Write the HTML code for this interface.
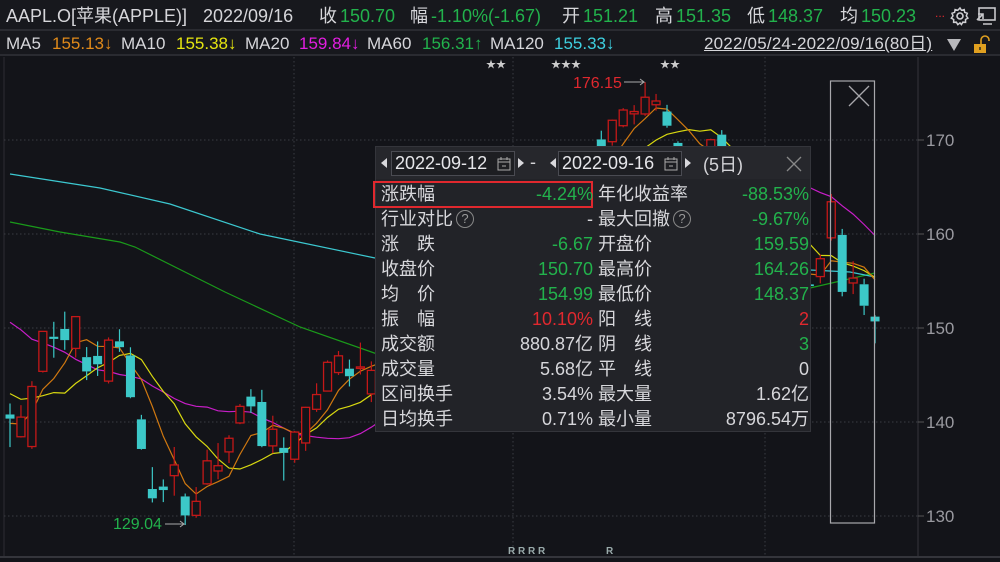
<!DOCTYPE html>
<html><head><meta charset="utf-8">
<style>
*{margin:0;padding:0;box-sizing:border-box}
body{width:1000px;height:562px;background:#131419;overflow:hidden;position:relative;font-family:"Liberation Sans","Noto Sans CJK SC",sans-serif;color:#d4d4d8}
.row{position:absolute;left:0;width:1000px;white-space:nowrap}
#r1{top:0;height:31px;background:#17181d;font-size:18px;line-height:33px;border-bottom:2px solid #2a2b31}
#r2{top:31px;height:25px;background:#17181d;font-size:17px;line-height:25px;border-bottom:2px solid #2a2b31}
.g{color:#22b24c}.w{color:#d6d6da}.o{color:#e08a1a}.y{color:#e5e510}.m{color:#e21ee0}.c{color:#3ed0e0}.r{color:#e0282e}
#panel{position:absolute;left:375px;top:146px;width:436px;height:286px;background:#222328;border:1px solid #34353b;font-size:18px}
#panel .hd{height:32px;background:#26272c;position:relative}
.dt{position:absolute;top:4px;height:25px;border:1px solid #4a4b52;background:#1d1e22;font-size:18px;line-height:23px;padding-left:3px;color:#e6e6ea;width:124px;white-space:nowrap}
.tri{position:absolute;top:11px;width:0;height:0;border-top:5px solid transparent;border-bottom:5px solid transparent}
.tl{border-right:6px solid #d8d8dc}.tr{border-left:6px solid #d8d8dc}
.rw{position:absolute;height:25px;line-height:25px;font-size:18px;white-space:nowrap}
.lab{position:absolute;color:#d8d8dc}
.val{position:absolute;text-align:right}
</style></head><body>
<div id="r1" class="row">
<span style="position:absolute;left:6px" class="w">AAPL.O[苹果(APPLE)]</span>
<span style="position:absolute;left:203px" class="w">2022/09/16</span>
<span style="position:absolute;left:319px" class="w">收</span><span style="position:absolute;left:340px" class="g">150.70</span>
<span style="position:absolute;left:410px" class="w">幅</span><span style="position:absolute;left:431px" class="g">-1.10%(-1.67)</span>
<span style="position:absolute;left:562px" class="w">开</span><span style="position:absolute;left:583px" class="g">151.21</span>
<span style="position:absolute;left:655px" class="w">高</span><span style="position:absolute;left:676px" class="g">151.35</span>
<span style="position:absolute;left:747px" class="w">低</span><span style="position:absolute;left:768px" class="g">148.37</span>
<span style="position:absolute;left:840px" class="w">均</span><span style="position:absolute;left:861px" class="g">150.23</span>
<span style="position:absolute;left:935px;top:-3px;font-size:12px" class="r">...</span>
<svg style="position:absolute;left:950px;top:6px" width="20" height="20" viewBox="0 0 20 20"><circle cx="10" cy="10" r="3" fill="none" stroke="#d0d0d4" stroke-width="1.6"/><path d="M10 2l1.5 2.3 2.7-.7.5 2.7 2.6 1-1 2.6 1.6 2.2-2.4 1.4.1 2.8-2.8-.1-1.4 2.4L10 16.9 7.8 18.6 6.4 16.2l-2.8.1.1-2.8-2.4-1.4L3 9.9 2 7.3l2.6-1 .5-2.7 2.7.7z" fill="none" stroke="#d0d0d4" stroke-width="1.5"/></svg>
<svg style="position:absolute;left:975px;top:6px" width="22" height="20" viewBox="0 0 22 20"><rect x="4" y="2" width="16" height="12" fill="none" stroke="#c8c8cc" stroke-width="1.6"/><path d="M8 18h9M2 14l6-6M3 8h5v5" stroke="#c8c8cc" stroke-width="1.6" fill="none"/></svg>
</div>
<div id="r2" class="row">
<span style="position:absolute;left:6px" class="w">MA5</span><span style="position:absolute;left:52px" class="o">155.13↓</span>
<span style="position:absolute;left:121px" class="w">MA10</span><span style="position:absolute;left:176px" class="y">155.38↓</span>
<span style="position:absolute;left:245px" class="w">MA20</span><span style="position:absolute;left:299px" class="m">159.84↓</span>
<span style="position:absolute;left:367px" class="w">MA60</span><span style="position:absolute;left:422px" class="g">156.31↑</span>
<span style="position:absolute;left:490px" class="w">MA120</span><span style="position:absolute;left:554px" class="c">155.33↓</span>
<span style="position:absolute;left:704px;text-decoration:underline;letter-spacing:0.2px" class="w">2022/05/24-2022/09/16(80日)</span>
<span style="position:absolute;left:947px;top:8px;width:0;height:0;border-left:7px solid transparent;border-right:7px solid transparent;border-top:12px solid #b8b8bc"></span>
<svg style="position:absolute;left:972px;top:3px" width="20" height="20" viewBox="0 0 20 20"><path d="M9 10V6a4 4 0 0 1 8 0v1" fill="none" stroke="#e0a020" stroke-width="1.6"/><rect x="2" y="10" width="12" height="9" fill="#e0a020"/><rect x="7.3" y="13" width="1.4" height="3" fill="#222"/></svg>
</div>
<svg id="ch" style="position:absolute;left:0;top:57px" width="1000" height="505"></svg>
<div id="panel">
 <div class="hd">
  <div class="tri tl" style="left:5px"></div>
  <div class="dt" style="left:15px">2022-09-12<svg style="position:absolute;right:3px;top:5px" width="14" height="14"><rect x="1" y="2" width="12" height="11" fill="none" stroke="#aaa"/><path d="M1 5h12M4 0v3M10 0v3M5 9h4" stroke="#aaa"/></svg></div>
  <div class="tri tr" style="left:142px"></div>
  <span style="position:absolute;left:154px;top:5px">-</span>
  <div class="tri tl" style="left:174px"></div>
  <div class="dt" style="left:182px">2022-09-16<svg style="position:absolute;right:3px;top:5px" width="14" height="14"><rect x="1" y="2" width="12" height="11" fill="none" stroke="#aaa"/><path d="M1 5h12M4 0v3M10 0v3M5 9h4" stroke="#aaa"/></svg></div>
  <div class="tri tr" style="left:309px"></div>
  <span style="position:absolute;left:327px;top:4px">(5日)</span>
  <svg style="position:absolute;left:410px;top:9px" width="16" height="16"><path d="M1 1l14 14M15 1L1 15" stroke="#888" stroke-width="1.3"/></svg>
 </div>
 <div style="position:absolute;left:-3px;top:34px;width:220px;height:27px;border:2px solid #e0282e"></div>
 <div id="rows"></div>
</div>
<script>
const Q='<span style="display:inline-block;width:18px;height:18px;border:1.5px solid #888;border-radius:50%;font-size:13px;line-height:15px;text-align:center;color:#999;vertical-align:2px;margin-left:3px">?</span>';
const rowsData=[["涨跌幅","-4.24%","g","年化收益率","-88.53%","g"],["行业对比ⓘ","-","w","最大回撤ⓘ","-9.67%","g"],["涨　跌","-6.67","g","开盘价","159.59","g"],["收盘价","150.70","g","最高价","164.26","g"],["均　价","154.99","g","最低价","148.37","g"],["振　幅","10.10%","r","阳　线","2","r"],["成交额","880.87亿","w","阴　线","3","g"],["成交量","5.68亿","w","平　线","0","w"],["区间换手","3.54%","w","最大量","1.62亿","w"],["日均换手","0.71%","w","最小量","8796.54万","w"]];
let h="";rowsData.forEach((r,i)=>{let t=35+i*25;
h+=`<div class="rw" style="top:${t}px;left:0;width:436px"><span class="lab" style="left:5px">${r[0].replace('ⓘ',Q)}</span><span class="val ${r[2]}" style="right:219px">${r[1]}</span><span class="lab" style="left:222px">${r[3].replace('ⓘ',Q)}</span><span class="val ${r[5]}" style="right:3px">${r[4]}</span></div>`});
document.getElementById('rows').innerHTML=h;
const pre=[156.8,156.57,163.64,157.65,157.96,159.48,166.02,156.77,157.28,152.06,154.51,146.5,142.56,147.11,145.54,149.24,140.82,137.35,137.59,143.11];
const D=`140.8 141.97 137.33 140.36,138.43 141.79 138.34 140.52,137.39 144.34 137.14 143.78,145.39 149.68 145.26 149.64,149.07 150.66 146.84 148.84,149.9 151.74 147.68 148.71,147.83 151.27 146.86 151.21,146.9 147.97 144.46 145.38,147.03 148.57 144.9 146.14,144.35 149 144.1 148.71,148.58 149.87 147.46 147.96,147.08 147.95 142.53 142.64,140.28 140.76 137.06 137.13,132.87 135.2 131.44 131.88,133.13 133.89 131.48 132.76,134.29 137.34 132.16 135.43,132.08 132.39 129.04 130.06,130.07 133.08 129.81 131.56,133.42 137.06 133.32 135.87,134.79 137.76 133.91 135.35,136.82 138.59 135.63 138.27,139.9 141.91 139.77 141.66,142.7 143.49 140.97 141.66,142.13 143.42 137.32 137.44,137.46 140.67 136.67 139.23,137.25 138.37 133.77 136.72,136.04 139.04 135.66 138.93,137.77 141.61 136.93 141.56,141.35 144.12 141.08 142.92,143.29 146.55 143.28 146.35,145.26 147.55 145 147.04,145.67 146.64 143.78 144.87,145.76 148.45 145.05 145.86,142.99 146.45 142.12 145.49,144.08 148.95 143.25 148.47,149.78 150.86 148.2 150.17,150.74 151.57 146.7 147.07,147.92 151.23 146.91 151,151.12 153.72 150.37 153.04,154.5 155.57 151.94 155.35,155.39 156.28 153.41 154.09,154.01 155.04 152.28 152.95,152.26 153.09 150.8 151.6,152.58 157.33 152.16 156.79,156.98 157.64 154.41 157.35,161.24 163.63 159.5 162.51,161.01 163.59 160.89 161.51,160.1 162.41 159.63 160.01,160.84 166.59 160.75 166.13,166.01 167.19 164.43 165.81,163.21 165.85 163 165.35,166.37 167.81 164.2 164.87,164.02 165.82 163.25 164.92,167.68 169.34 166.9 169.24,170.06 170.99 168.19 168.49,169.82 172.17 169.4 172.1,171.52 173.39 171.35 173.19,172.78 173.71 171.66 173.03,172.77 176.15 172.57 174.55,173.75 174.9 173.12 174.15,173.03 173.74 171.31 171.52,169.69 169.86 167.14 167.57,167.08 168.71 166.65 167.23,167.32 168.11 166.25 167.53,168.78 170.14 168.35 170.03,170.57 171.05 163.56 163.62,161.15 162.9 159.82 161.38,162.13 162.56 157.72 158.91,160.31 160.58 157.14 157.22,156.64 158.42 154.67 157.96,159.75 160.36 154.97 155.81,156.47 157.09 153.69 154.53,154.82 156.67 153.61 155.96,154.64 156.36 152.68 154.46,155.47 157.82 154.75 157.37,159.59 164.26 159.3 163.43,159.9 160.54 153.37 153.84,154.79 157.1 153.61 155.31,154.65 155.24 151.38 152.37,151.21 151.35 148.37 150.7`.split(',').map(s=>s.split(' ').map(Number));
const O=57;const Y=p=>140+(170-p)*9.4-O;const X=i=>10+i*10.95;
let s="";
s+=`<line x1="4" y1="0" x2="4" y2="500" stroke="#2c2d33"/><line x1="0" y1="500" x2="1000" y2="500" stroke="#34353b" stroke-width="2"/><line x1="918" y1="0" x2="918" y2="500" stroke="#34353b"/>`;
[170,160,150,140,130].forEach(p=>{let y=Y(p);s+=`<line x1="4" y1="${y}" x2="918" y2="${y}" stroke="#3a3b42" stroke-dasharray="1.5 2.5"/><line x1="918" y1="${y}" x2="924" y2="${y}" stroke="#555"/><text x="926" y="${y+6}" fill="#9a9aa0" font-size="17" font-family="Liberation Sans">${p}</text>`});
[294,513,765].forEach(x=>s+=`<line x1="${x}" y1="0" x2="${x}" y2="500" stroke="#3a3b42" stroke-dasharray="1.5 2.5"/>`);
s+=`<polyline fill="none" stroke="#1a9a1a" stroke-width="1.2" points="10,${222-O} 60,${232-O} 120,${242-O} 135,${247-O} 225,${292-O} 300,${327-O} 380,${355-O} 420,${365-O}"/>`;
s+=`<polyline fill="none" stroke="#3cc8d0" stroke-width="1.2" points="10,${174-O} 100,${188-O} 170,${204-O} 260,${234-O} 375,${258-O}"/>`;
s+=`<polyline fill="none" stroke="#1a9a1a" stroke-width="1.2" points="810,${288-O} 875,${273-O}"/>`;
s+=`<polyline fill="none" stroke="#3cc8d0" stroke-width="1.2" points="810,${270-O} 850,${272-O} 875,${277-O}"/>`;
const closes=pre.concat(D.map(d=>d[3]));
function ma(n,col){let pts=[];for(let i=0;i<80;i++){let j=i+20;let a=0;for(let k=0;k<n;k++)a+=closes[j-k];pts.push(X(i).toFixed(1)+","+Y(a/n).toFixed(1))}s+=`<polyline fill="none" stroke="${col}" stroke-width="1.2" points="${pts.join(' ')}"/>`}
ma(20,"#c81ec8");ma(10,"#d8d810");ma(5,"#d07810");
D.forEach((d,i)=>{let[o,hh,l,c]=d;let x=X(i);let up=c>=o;let col=up?"#c41818":"#3cc8c8";
let t=Y(Math.max(o,c)),b=Y(Math.min(o,c));if(b-t<1.5)b=t+1.5;
s+=`<line x1="${x}" y1="${Y(hh)}" x2="${x}" y2="${t}" stroke="${col}" stroke-width="1.2"/><line x1="${x}" y1="${b}" x2="${x}" y2="${Y(l)}" stroke="${col}" stroke-width="1.2"/>`;
if(up)s+=`<rect x="${x-4}" y="${t}" width="8" height="${b-t}" fill="#131419" stroke="${col}" stroke-width="1.3"/>`;else s+=`<rect x="${x-4.5}" y="${t}" width="9" height="${b-t}" fill="${col}"/>`});
s+=`<text x="113" y="${529-O}" fill="#22b24c" font-size="16" font-family="Liberation Sans">129.04</text><path d="M165 ${524-O}h19l-4 -3M184 ${524-O}l-4 3" stroke="#aaa" fill="none"/>`;
s+=`<text x="573" y="${88-O}" fill="#e0282e" font-size="16" font-family="Liberation Sans">176.15</text><path d="M624 ${82-O}h20l-4 -3M644 ${82-O}l-4 3" stroke="#aaa" fill="none"/>`;
s+=`<text x="486" y="${68-O}" fill="#ccc" font-size="10">★★</text><text x="551" y="${68-O}" fill="#ccc" font-size="10">★★★</text><text x="660" y="${68-O}" fill="#ccc" font-size="10">★★</text>`;
s+=`<text x="508" y="${554-O}" fill="#9aa" font-size="10" font-weight="bold" font-family="Liberation Sans">R R R R</text><text x="606" y="${554-O}" fill="#9aa" font-size="10" font-weight="bold" font-family="Liberation Sans">R</text>`;
s+=`<rect x="830.5" y="${81-O}" width="44" height="442" fill="none" stroke="#a8a8ac" stroke-width="1.2"/><path d="M849 ${86-O}l20 20M869 ${86-O}l-20 20" stroke="#a8a8ac" stroke-width="1.3"/>`;
document.getElementById('ch').innerHTML=s;
</script>
</body></html>
